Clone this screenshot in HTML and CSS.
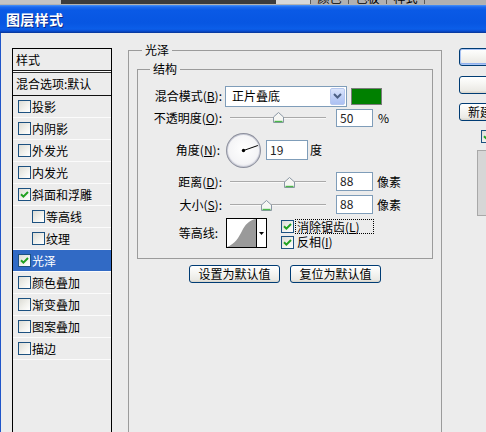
FILE: index.html
```html
<!DOCTYPE html>
<html lang="zh">
<head>
<meta charset="utf-8">
<title>图层样式</title>
<link rel="stylesheet" href="styles.css">
</head>
<body>
<div class="top">
  <div class="seg s1"></div>
  <div class="seg s2"></div>
  <div class="seg s3"></div>
  <div class="tabs">
    <span class="tab">颜色</span><span class="tab">色板</span><span class="tab">样式</span><span class="tab"></span>
  </div>
</div>
<div class="titlebar"><span class="title">图层样式</span></div>
<div class="body">
  <div class="list">
    <div class="row head">样式</div>
    <div class="sep"></div>
    <div class="row blend">混合选项:默认</div>
    <div class="row"><span class="cb"></span>投影</div>
    <div class="row"><span class="cb"></span>内阴影</div>
    <div class="row"><span class="cb"></span>外发光</div>
    <div class="row"><span class="cb"></span>内发光</div>
    <div class="row"><span class="cb"><svg viewBox="0 0 11 11" width="11" height="11"><path d="M2 5.2 L4.4 7.6 L9 3" fill="none" stroke="#21a121" stroke-width="2"/></svg></span>斜面和浮雕</div>
    <div class="row sub"><span class="cb"></span>等高线</div>
    <div class="row sub"><span class="cb"></span>纹理</div>
    <div class="row sel"><span class="cb"><svg viewBox="0 0 11 11" width="11" height="11"><path d="M2 5.2 L4.4 7.6 L9 3" fill="none" stroke="#21a121" stroke-width="2"/></svg></span>光泽</div>
    <div class="row"><span class="cb"></span>颜色叠加</div>
    <div class="row"><span class="cb"></span>渐变叠加</div>
    <div class="row"><span class="cb"></span>图案叠加</div>
    <div class="row"><span class="cb"></span>描边</div>
  </div>

  <fieldset class="group outer">
    <legend>光泽</legend>
    <div class="gbody obody">
      <fieldset class="group inner">
        <legend>结构</legend>
        <div class="gbody ibody">
          <div class="frow r1">
            <span class="lbl">混合模式(<u>B</u>):</span>
            <div class="select">
              <span class="seltext">正片叠底</span>
              <span class="selbtn"><svg width="9" height="6" viewBox="0 0 9 6"><path d="M1 1 L4.5 4.5 L8 1" fill="none" stroke="#4d6185" stroke-width="2"/></svg></span>
            </div>
            <span class="swatch"></span>
          </div>
          <div class="frow r2">
            <span class="lbl">不透明度(<u>O</u>):</span>
            <div class="slider"><span class="track"></span><svg class="thumb" style="left:43px" width="11" height="11" viewBox="0 0 11 11"><path d="M5.5 0.5 L10.5 5 V10.5 H0.5 V5 Z" fill="#f6f6f3" stroke="#8a97a5"/><path d="M1.5 9.5 H9.5" stroke="#4cb64c" stroke-width="1.4"/></svg></div>
            <span class="num">50</span>
            <span class="unit pct">%</span>
          </div>
          <div class="frow r3">
            <span class="lbl">角度(<u>N</u>):</span>
            <svg class="dial" width="37" height="37" viewBox="0 0 37 37">
              <defs>
                <radialGradient id="dg" cx="50%" cy="45%" r="60%">
                  <stop offset="0" stop-color="#ffffff"/>
                  <stop offset="0.8" stop-color="#f4f4f6"/>
                  <stop offset="1" stop-color="#dcdce4"/>
                </radialGradient>
              </defs>
              <circle cx="18.5" cy="18.5" r="17.5" fill="#8c8f9c"/>
              <circle cx="18.5" cy="18.5" r="16.6" fill="#c9cbd6"/>
              <circle cx="18.5" cy="18.5" r="15.6" fill="url(#dg)"/>
              <line x1="18.5" y1="18.5" x2="32.9" y2="13.5" stroke="#000" stroke-width="1"/>
              <circle cx="18.5" cy="18.5" r="1.7" fill="#000"/>
            </svg>
            <span class="num wide">19</span>
            <span class="unit deg">度</span>
          </div>
          <div class="frow r4">
            <span class="lbl">距离(<u>D</u>):</span>
            <div class="slider"><span class="track"></span><svg class="thumb" style="left:54px" width="11" height="11" viewBox="0 0 11 11"><path d="M5.5 0.5 L10.5 5 V10.5 H0.5 V5 Z" fill="#f6f6f3" stroke="#8a97a5"/><path d="M1.5 9.5 H9.5" stroke="#4cb64c" stroke-width="1.4"/></svg></div>
            <span class="num">88</span>
            <span class="unit">像素</span>
          </div>
          <div class="frow r5">
            <span class="lbl">大小(<u>S</u>):</span>
            <div class="slider"><span class="track"></span><svg class="thumb" style="left:31px" width="11" height="11" viewBox="0 0 11 11"><path d="M5.5 0.5 L10.5 5 V10.5 H0.5 V5 Z" fill="#f6f6f3" stroke="#8a97a5"/><path d="M1.5 9.5 H9.5" stroke="#4cb64c" stroke-width="1.4"/></svg></div>
            <span class="num">88</span>
            <span class="unit">像素</span>
          </div>
          <div class="frow r6">
            <span class="lbl">等高线:</span>
            <div class="contour">
              <svg class="graph" width="29" height="28" viewBox="0 0 29 28">
                <rect width="29" height="28" fill="#fff"/>
                <path d="M0 28 C8 25 12 18 15 12 S22 1 29 0 L29 28 Z" fill="#9a9a9a"/>
              </svg>
              <span class="carrow"><svg width="5" height="3" viewBox="0 0 5 3"><path d="M0 0 H5 L2.5 3 Z" fill="#000"/></svg></span>
            </div>
            <div class="checks">
              <div class="chk"><span class="cb"><svg viewBox="0 0 11 11" width="11" height="11"><path d="M2 5.2 L4.4 7.6 L9 3" fill="none" stroke="#21a121" stroke-width="2"/></svg></span><span class="focus">消除锯齿(<u>L</u>)</span></div>
              <div class="chk"><span class="cb"><svg viewBox="0 0 11 11" width="11" height="11"><path d="M2 5.2 L4.4 7.6 L9 3" fill="none" stroke="#21a121" stroke-width="2"/></svg></span><span class="plain">反相(<u>I</u>)</span></div>
            </div>
          </div>
        </div>
      </fieldset>
      <div class="btnrow">
        <button class="btn">设置为默认值</button>
        <button class="btn">复位为默认值</button>
      </div>
    </div>
  </fieldset>

  <div class="side">
    <button class="sbtn def"></button>
    <button class="sbtn b2"></button>
    <button class="sbtn b3">新建样式(W)...</button>
    <span class="cb scb"><svg viewBox="0 0 11 11" width="11" height="11"><path d="M2 5.2 L4.4 7.6 L9 3" fill="none" stroke="#21a121" stroke-width="2"/></svg></span>
    <div class="preview"></div>
  </div>
</div>
</body>
</html>
```
FILE: styles.css
```css
* { box-sizing: border-box; }
html, body { margin: 0; padding: 0; }
body {
  width: 486px;
  height: 432px;
  overflow: hidden;
  background: #ececec;
  font-family: "Noto Sans CJK SC", "Noto Sans", sans-serif;
  font-size: 12px;
  color: #000;
}

/* top strip (background app) */
.top {
  height: 5px;
  display: flex;
  overflow: hidden;
  border-bottom: 1px solid #b3b3b3;
}
.seg { flex: none; height: 4px; }
.s1 { width: 61px; background: #c4c4c4; }
.s2 { width: 215px; background: #3c3c3c; }
.s3 { width: 34px; background: #d8d8d8; }
.tabs { flex: 1; display: flex; background: #b1b1b1; height: 4px; overflow: hidden; }
.tab {
  flex: none;
  width: 38px;
  border-left: 1px solid #5a5a5a;
  text-align: center;
  font-size: 12px;
  line-height: 12px;
  margin-top: -8px;
  height: 12px;
}

/* title bar */
.titlebar {
  height: 28px;
  background: linear-gradient(to bottom, #4a93f6 0px, #1c6af0 2px, #0a5ae6 5px, #0756e2 18px, #0b5ee9 24px, #0a4fd3 26px, #073fb0 27px, #0a3596 28px);
  display: flex;
  align-items: center;
}
.title {
  padding-left: 6px;
  color: #fff;
  font-weight: bold;
  font-size: 14px;
  line-height: 16px;
  text-shadow: 1px 1px 0 #0b2b8c;
  letter-spacing: 0.3px;
}

/* dialog body */
.body {
  display: flex;
  align-items: flex-start;
  height: 399px;
  overflow: hidden;
  border-left: 1px solid #1f55c9;
}

/* left style list */
.list {
  flex: none;
  width: 100px;
  height: 400px;
  margin: 15px 0 0 11px;
  border: 1px solid #000;
}
.row {
  height: 22px;
  border-bottom: 1px solid #fbfbfb;
  display: flex;
  align-items: center;
  padding-left: 5px;
  white-space: nowrap;
  line-height: 14px;
}
.row.head { padding-left: 3px; border-bottom: 1px solid #1a1a1a; }
.sep { height: 2px; border-top: 1px solid #fff; border-bottom: 1px solid #333; }
.row.blend { height: 23px; padding-left: 3px; border-bottom: 1px solid #111; }
.row.sub { padding-left: 19px; }
.row.sel { background: #316ac5; color: #fff; }

.cb {
  flex: none;
  width: 13px;
  height: 13px;
  border: 1px solid #1c5180;
  background: linear-gradient(135deg, #dcdcd5 0%, #f3f3ef 60%, #ffffff 100%);
  margin-right: 1px;
  display: inline-flex;
  align-items: center;
  justify-content: center;
}

/* group boxes */
fieldset.group {
  margin: 0;
  padding: 0;
  min-width: 0;
  border: 1px solid #9b9b9b;
}
fieldset.group > legend {
  padding: 0 3px;
  height: 16px;
  line-height: 16px;
  font-size: 12px;
}
fieldset.outer {
  flex: none;
  width: 314px;
  height: 420px;
  margin: 9px 0 0 16px;
}
fieldset.outer > legend { margin-left: 13px; }
.obody { padding: 3px 8px 0 8px; }
fieldset.inner { width: 296px; }
fieldset.inner > legend { margin-left: 12px; }
.ibody { padding: 8px 0 10px 0; }

.frow { display: flex; align-items: center; white-space: nowrap; }
.r1 { height: 22px; }
.r2 { height: 18px; margin-top: 2px; }
.r3 { height: 36px; margin-top: 5px; }
.r4 { height: 19px; margin-top: 4px; }
.r5 { height: 19px; margin-top: 4px; }
.r6 { height: 30px; margin-top: 4px; align-items: flex-start; }

.lbl { flex: none; width: 84px; text-align: right; line-height: 16px; }
.r3 .lbl { padding-right: 2px; }
.r6 .lbl { padding-right: 4px; align-self: center; }

.select {
  flex: none;
  width: 122px;
  height: 21px;
  margin-left: 3px;
  border: 1px solid #7f9db9;
  background: #fff;
  display: flex;
  align-items: center;
  padding: 1px;
}
.seltext { flex: 1; padding-left: 5px; line-height: 16px; }
.selbtn {
  flex: none;
  width: 15px;
  height: 17px;
  border: 1px solid #b6c7ee;
  border-radius: 2px;
  background: linear-gradient(to bottom, #dbe5fb, #bccdf6 60%, #adc1f3);
  display: flex;
  align-items: center;
  justify-content: center;
}
.swatch {
  flex: none;
  width: 31px;
  height: 17px;
  margin-left: 4px;
  background: #008000;
  border: 1px solid #7b7b7b;
}

.slider {
  flex: none;
  position: relative;
  width: 96px;
  height: 18px;
  margin-left: 8px;
  display: flex;
  align-items: center;
}
.track {
  display: block;
  width: 100%;
  height: 2px;
  border-top: 1px solid #a9a9a9;
  background: #f8f8f8;
}
.thumb { position: absolute; top: 3px; }
.r4 .thumb, .r5 .thumb { top: 4px; }

.num {
  flex: none;
  width: 37px;
  height: 18px;
  margin-left: 10px;
  border: 1px solid #7f9db9;
  background: #fff;
  padding-left: 3px;
  line-height: 16px;
  color: #222;
}
.r4 .num, .r5 .num { height: 19px; }
.num.wide { width: 42px; height: 20px; margin-left: 4px; line-height: 18px; }
.unit { flex: none; margin-left: 4px; line-height: 16px; }
.unit.pct { margin-left: 5px; }
.unit.deg { margin-left: 2px; }
.dial { flex: none; margin-left: 3px; }

.contour {
  flex: none;
  width: 41px;
  height: 30px;
  margin-left: 4px;
  border: 1px solid #000;
  display: flex;
  background: #fff;
}
.graph { flex: none; display: block; }
.carrow {
  flex: none;
  width: 10px;
  border-left: 1px solid #000;
  display: flex;
  align-items: center;
  justify-content: center;
}

.checks { margin-left: 14px; display: flex; flex-direction: column; }
.chk { height: 16px; display: flex; align-items: center; }
.chk .cb { margin-right: 1px; }
.focus { border: 1px dotted #000; padding: 0 2px 0 1px; line-height: 13px; height: 15px; width: 79px; }
.plain { padding-left: 2px; line-height: 14px; }

.btnrow { display: flex; justify-content: center; gap: 10px; margin-top: 6px; }
.btn, .sbtn {
  font-family: "Noto Sans CJK SC", "Noto Sans", sans-serif;
  font-size: 12px;
  color: #000;
  border: 1px solid #003c74;
  border-radius: 3px;
  background: linear-gradient(to bottom, #ffffff 0%, #f6f6f3 40%, #ebeae5 85%, #d7d3c9 100%);
  padding: 0;
  line-height: 16px;
}
.btn { width: 91px; height: 18px; }

.side {
  flex: none;
  width: 90px;
  margin: 15px 0 0 17px;
  display: flex;
  flex-direction: column;
  align-items: flex-start;
}
.sbtn { width: 86px; height: 18px; text-align: left; padding-left: 8px; white-space: nowrap; }
.sbtn.def { box-shadow: inset 0 0 0 1px #a9c4f4, inset 0 -1px 0 1px #8fb0ee; }
.sbtn.b2 { margin-top: 10px; }
.sbtn.b3 { margin-top: 9px; }
.scb { margin: 9px 0 0 22px; }
.preview {
  margin: 7px 0 0 18px;
  width: 60px;
  height: 66px;
  background: #d6d6d6;
  border: 1px solid #a8a8a8;
}
```
